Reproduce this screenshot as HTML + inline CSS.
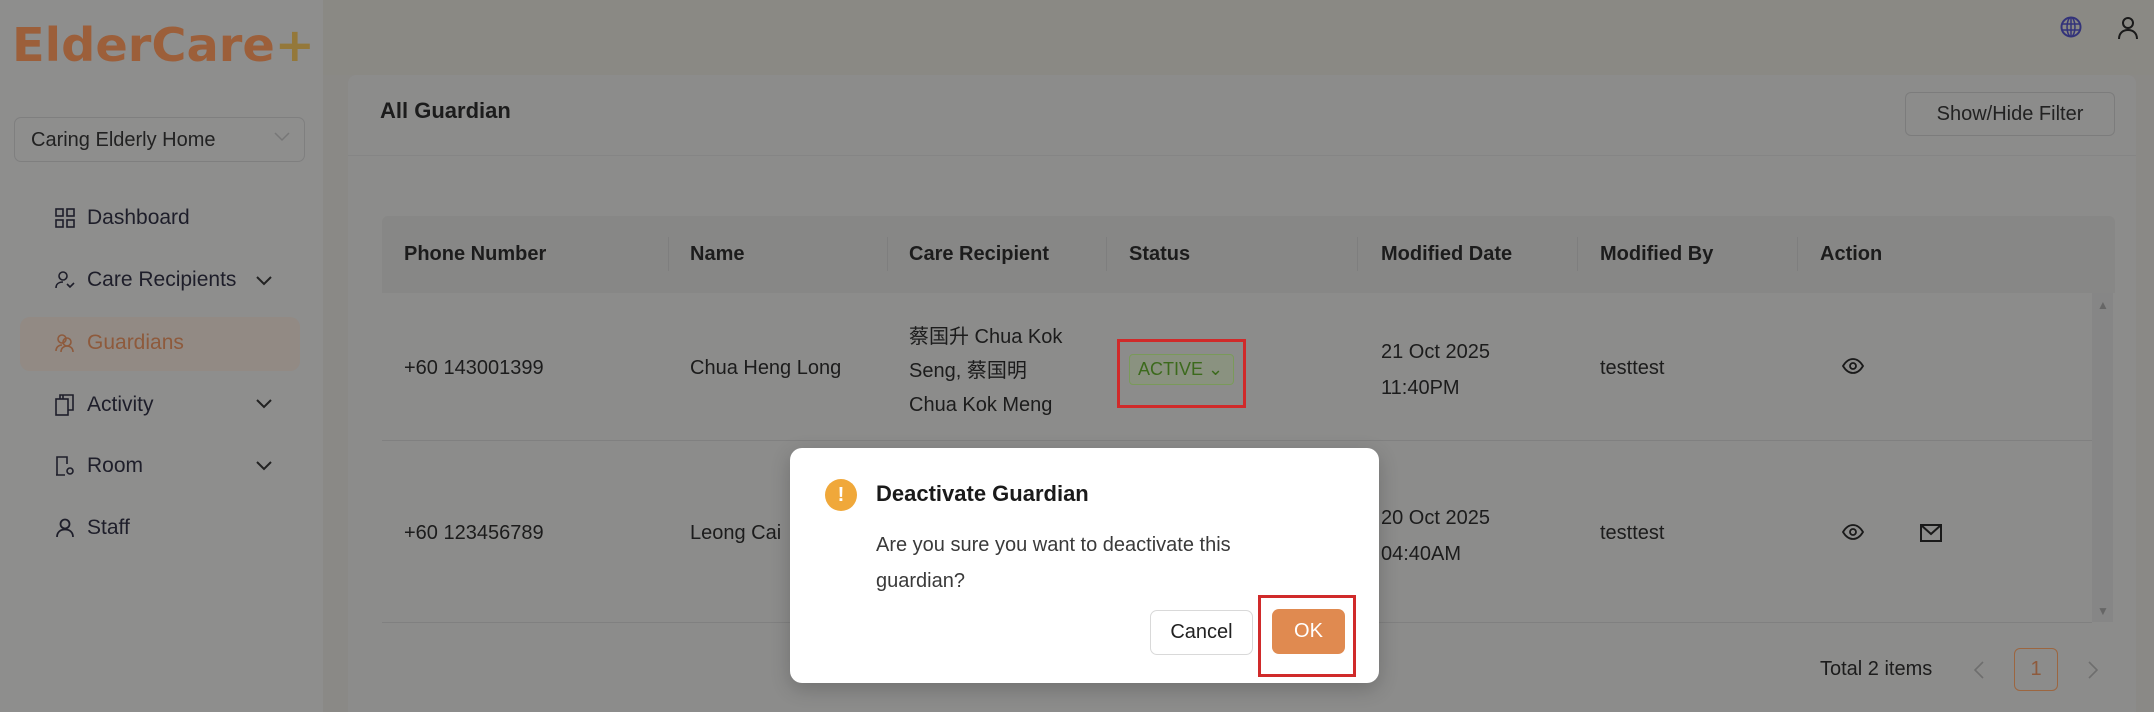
<!DOCTYPE html>
<html><head><meta charset="utf-8"><style>
*{box-sizing:border-box;margin:0;padding:0}
body{width:2154px;height:712px;overflow:hidden;background:#8a8986;font-family:"Liberation Sans","Noto Sans CJK SC",sans-serif;position:relative;color:#1c1c1c}
.abs{position:absolute}
.side{left:0;top:0;width:323px;height:712px;background:#8e8e8d}
.top{left:323px;top:0;right:0;height:75px;background:#8a8984}
.logo{left:12px;top:18px;font-size:46px;font-weight:bold;color:#9c5f3a;letter-spacing:0px;font-family:"DejaVu Sans",sans-serif;transform:scaleX(1.04);transform-origin:left}
.logo span{color:#94783a}
.sel{left:14px;top:117px;width:291px;height:45px;border:1px solid #7f7f7f;border-radius:7px;font-size:20px;padding:11px 16px;color:#222}
.mi{left:55px;font-size:21px;color:#1e1e2a;display:flex;align-items:center;gap:12px}
.mi svg{flex:none}
.chev{left:256px}
.card{left:348px;top:75px;width:1788px;height:637px;background:#8c8c8b;border-radius:8px 8px 0 0}
.th{font-size:20px;font-weight:bold;top:243px}
.td{font-size:20px}
.div{width:1px;height:34px;background:#7e7e7e;top:237px}
</style></head><body>
<div class="abs side"></div>
<div class="abs top"></div>
<div class="abs logo">ElderCare<span>+</span></div>
<div class="abs sel">Caring Elderly Home<svg style="position:absolute;right:14px;top:14px" width="16" height="10" viewBox="0 0 16 10"><path d="M1 1l7 7 7-7" fill="none" stroke="#777" stroke-width="1.5"/></svg></div>
<div class="abs" style="left:20px;top:317px;width:280px;height:54px;background:#928a84;border-radius:10px"></div>
<div class="abs mi" style="top:206px"><svg width="20" height="20" viewBox="0 0 20 20" fill="none" stroke="#1e1e2a" stroke-width="1.6"><rect x="1" y="1" width="7" height="7"/><rect x="12" y="1" width="7" height="7"/><rect x="1" y="12" width="7" height="7"/><rect x="12" y="12" width="7" height="7"/></svg>Dashboard</div>
<div class="abs mi" style="top:268px"><svg width="20" height="20" viewBox="0 0 20 20" fill="none" stroke="#1e1e2a" stroke-width="1.6"><circle cx="8" cy="6" r="4"/><path d="M1 18c0-4 3-6 7-6M12 14l3 3 4-4"/></svg>Care Recipients</div>
<div class="abs mi" style="top:331px;color:#8e5a3c"><svg width="20" height="20" viewBox="0 0 20 20" fill="none" stroke="#8e5a3c" stroke-width="1.6"><circle cx="7" cy="6" r="4"/><circle cx="12" cy="9" r="4"/><path d="M1 18c0-4 3-6 6-6M6 19c0-4 3-6 6-6s6 2 6 6"/></svg>Guardians</div>
<div class="abs mi" style="top:393px"><svg width="20" height="22" viewBox="0 0 20 22" fill="none" stroke="#1e1e2a" stroke-width="1.6"><rect x="1" y="5" width="12" height="16"/><path d="M5 5V1h13v15h-5M8 1v4"/></svg>Activity</div>
<div class="abs mi" style="top:454px"><svg width="20" height="20" viewBox="0 0 20 20" fill="none" stroke="#1e1e2a" stroke-width="1.6"><path d="M2 19V1h10v7M1 19h9"/><circle cx="15" cy="15" r="3"/></svg>Room</div>
<div class="abs mi" style="top:516px"><svg width="20" height="20" viewBox="0 0 20 20" fill="none" stroke="#1e1e2a" stroke-width="1.8"><circle cx="10" cy="6" r="4.5"/><path d="M2 19c0-5 3.5-7.5 8-7.5s8 2.5 8 7.5"/></svg>Staff</div>
<svg class="abs chev" style="top:276px" width="16" height="10" viewBox="0 0 16 10"><path d="M1 1l7 7 7-7" fill="none" stroke="#222" stroke-width="2"/></svg>
<svg class="abs chev" style="top:399px" width="16" height="10" viewBox="0 0 16 10"><path d="M1 1l7 7 7-7" fill="none" stroke="#222" stroke-width="2"/></svg>
<svg class="abs chev" style="top:461px" width="16" height="10" viewBox="0 0 16 10"><path d="M1 1l7 7 7-7" fill="none" stroke="#222" stroke-width="2"/></svg>
<svg class="abs" style="left:2060px;top:16px" width="22" height="22" viewBox="0 0 22 22"><circle cx="11" cy="11" r="9.5" fill="none" stroke="#33337a" stroke-width="2"/><ellipse cx="11" cy="11" rx="4" ry="9.5" fill="none" stroke="#33337a" stroke-width="1.5"/><path d="M2 8h18M2 14h18M11 1.5v19" stroke="#33337a" stroke-width="1.5"/></svg>
<svg class="abs" style="left:2117px;top:16px" width="22" height="24" viewBox="0 0 22 24"><circle cx="11" cy="7" r="5" fill="none" stroke="#1a1a1a" stroke-width="2"/><path d="M2 23c0-6 4-9 9-9s9 3 9 9" fill="none" stroke="#1a1a1a" stroke-width="2"/></svg>
<div class="abs card"></div>
<div class="abs" style="left:380px;top:98px;font-size:22px;font-weight:bold">All Guardian</div>
<div class="abs" style="left:348px;top:155px;width:1788px;height:1px;background:#858585"></div>
<div class="abs" style="left:1905px;top:92px;width:210px;height:44px;border:1px solid #7c7c7c;border-radius:6px;font-size:20px;text-align:center;line-height:42px;color:#222">Show/Hide Filter</div>
<div class="abs" style="left:382px;top:216px;width:1733px;height:77px;background:#878786;border-radius:6px 6px 0 0"></div>
<div class="abs th" style="left:404px">Phone Number</div>
<div class="abs th" style="left:690px">Name</div>
<div class="abs th" style="left:909px">Care Recipient</div>
<div class="abs th" style="left:1129px">Status</div>
<div class="abs th" style="left:1381px">Modified Date</div>
<div class="abs th" style="left:1600px">Modified By</div>
<div class="abs th" style="left:1820px">Action</div>
<div class="abs div" style="left:668px"></div><div class="abs div" style="left:887px"></div><div class="abs div" style="left:1106px"></div><div class="abs div" style="left:1357px"></div><div class="abs div" style="left:1577px"></div><div class="abs div" style="left:1797px"></div>
<div class="abs" style="left:382px;top:440px;width:1710px;height:1px;background:#808080"></div>
<div class="abs" style="left:382px;top:622px;width:1710px;height:1px;background:#808080"></div>
<div class="abs" style="left:2092px;top:293px;width:21px;height:329px;background:#868686"></div>
<div class="abs" style="left:2097px;top:298px;font-size:12px;color:#666">&#9650;</div>
<div class="abs" style="left:2097px;top:604px;font-size:12px;color:#666">&#9660;</div>
<div class="abs td" style="left:404px;top:357px">+60 143001399</div>
<div class="abs td" style="left:690px;top:357px">Chua Heng Long</div>
<div class="abs td" style="left:909px;top:320px;line-height:34px">蔡国升 Chua Kok<br>Seng, 蔡国明<br>Chua Kok Meng</div>
<div class="abs" style="left:1117px;top:339px;width:129px;height:69px;border:3px solid #d02a2a"></div>
<div class="abs" style="left:1129px;top:354px;width:105px;height:31px;border:1px solid #7a9a5a;background:#8a9280;border-radius:4px;color:#3c6a1c;font-size:18px;line-height:29px;padding-left:8px">ACTIVE &#8964;</div>
<div class="abs td" style="left:1381px;top:334px;line-height:36px">21 Oct 2025<br>11:40PM</div>
<div class="abs td" style="left:1600px;top:357px">testtest</div>
<svg class="abs" style="left:1842px;top:358px" width="22" height="16" viewBox="0 0 22 16"><path d="M1 8C4 3 7 1 11 1s7 2 10 7c-3 5-6 7-10 7S4 13 1 8z" fill="none" stroke="#1a1a1a" stroke-width="1.8"/><circle cx="11" cy="8" r="3" fill="none" stroke="#1a1a1a" stroke-width="1.8"/></svg>
<div class="abs td" style="left:404px;top:522px">+60 123456789</div>
<div class="abs td" style="left:690px;top:522px">Leong Cai</div>
<div class="abs td" style="left:1381px;top:500px;line-height:36px">20 Oct 2025<br>04:40AM</div>
<div class="abs td" style="left:1600px;top:522px">testtest</div>
<svg class="abs" style="left:1842px;top:524px" width="22" height="16" viewBox="0 0 22 16"><path d="M1 8C4 3 7 1 11 1s7 2 10 7c-3 5-6 7-10 7S4 13 1 8z" fill="none" stroke="#1a1a1a" stroke-width="1.8"/><circle cx="11" cy="8" r="3" fill="none" stroke="#1a1a1a" stroke-width="1.8"/></svg>
<svg class="abs" style="left:1920px;top:524px" width="22" height="18" viewBox="0 0 22 18"><rect x="1" y="1" width="20" height="16" fill="none" stroke="#1a1a1a" stroke-width="2"/><path d="M1 1l10 9 10-9" fill="none" stroke="#1a1a1a" stroke-width="2"/></svg>
<div class="abs td" style="left:1820px;top:658px">Total 2 items</div>
<svg class="abs" style="left:1974px;top:661px" width="10" height="18" viewBox="0 0 10 18"><path d="M9 1L1 9l8 8" fill="none" stroke="#6e6e6e" stroke-width="1.6"/></svg>
<div class="abs" style="left:2014px;top:648px;width:44px;height:43px;border:1px solid #9c6640;border-radius:6px;color:#8e5a3c;font-size:20px;text-align:center;line-height:41px">1</div>
<svg class="abs" style="left:2088px;top:661px" width="10" height="18" viewBox="0 0 10 18"><path d="M1 1l8 8-8 8" fill="none" stroke="#6e6e6e" stroke-width="1.6"/></svg>
<div class="abs" style="left:790px;top:448px;width:589px;height:235px;background:#fff;border-radius:12px;box-shadow:0 6px 20px rgba(0,0,0,.2)"></div>
<div class="abs" style="left:825px;top:479px;width:32px;height:32px;border-radius:50%;background:#f0a83a;color:#fff;font-size:20px;font-weight:bold;text-align:center;line-height:32px">!</div>
<div class="abs" style="left:876px;top:481px;font-size:22px;font-weight:bold;color:#1a1a1a">Deactivate Guardian</div>
<div class="abs" style="left:876px;top:527px;font-size:20px;line-height:36px;color:#3a3a3a">Are you sure you want to deactivate this<br>guardian?</div>
<div class="abs" style="left:1150px;top:610px;width:103px;height:45px;border:1px solid #d9d9d9;border-radius:7px;font-size:20px;text-align:center;line-height:43px;color:#222">Cancel</div>
<div class="abs" style="left:1258px;top:595px;width:98px;height:82px;border:3px solid #d02a2a"></div>
<div class="abs" style="left:1272px;top:609px;width:73px;height:45px;background:#e08a50;border-radius:7px;font-size:20px;text-align:center;line-height:45px;color:#fff">OK</div>
</body></html>
